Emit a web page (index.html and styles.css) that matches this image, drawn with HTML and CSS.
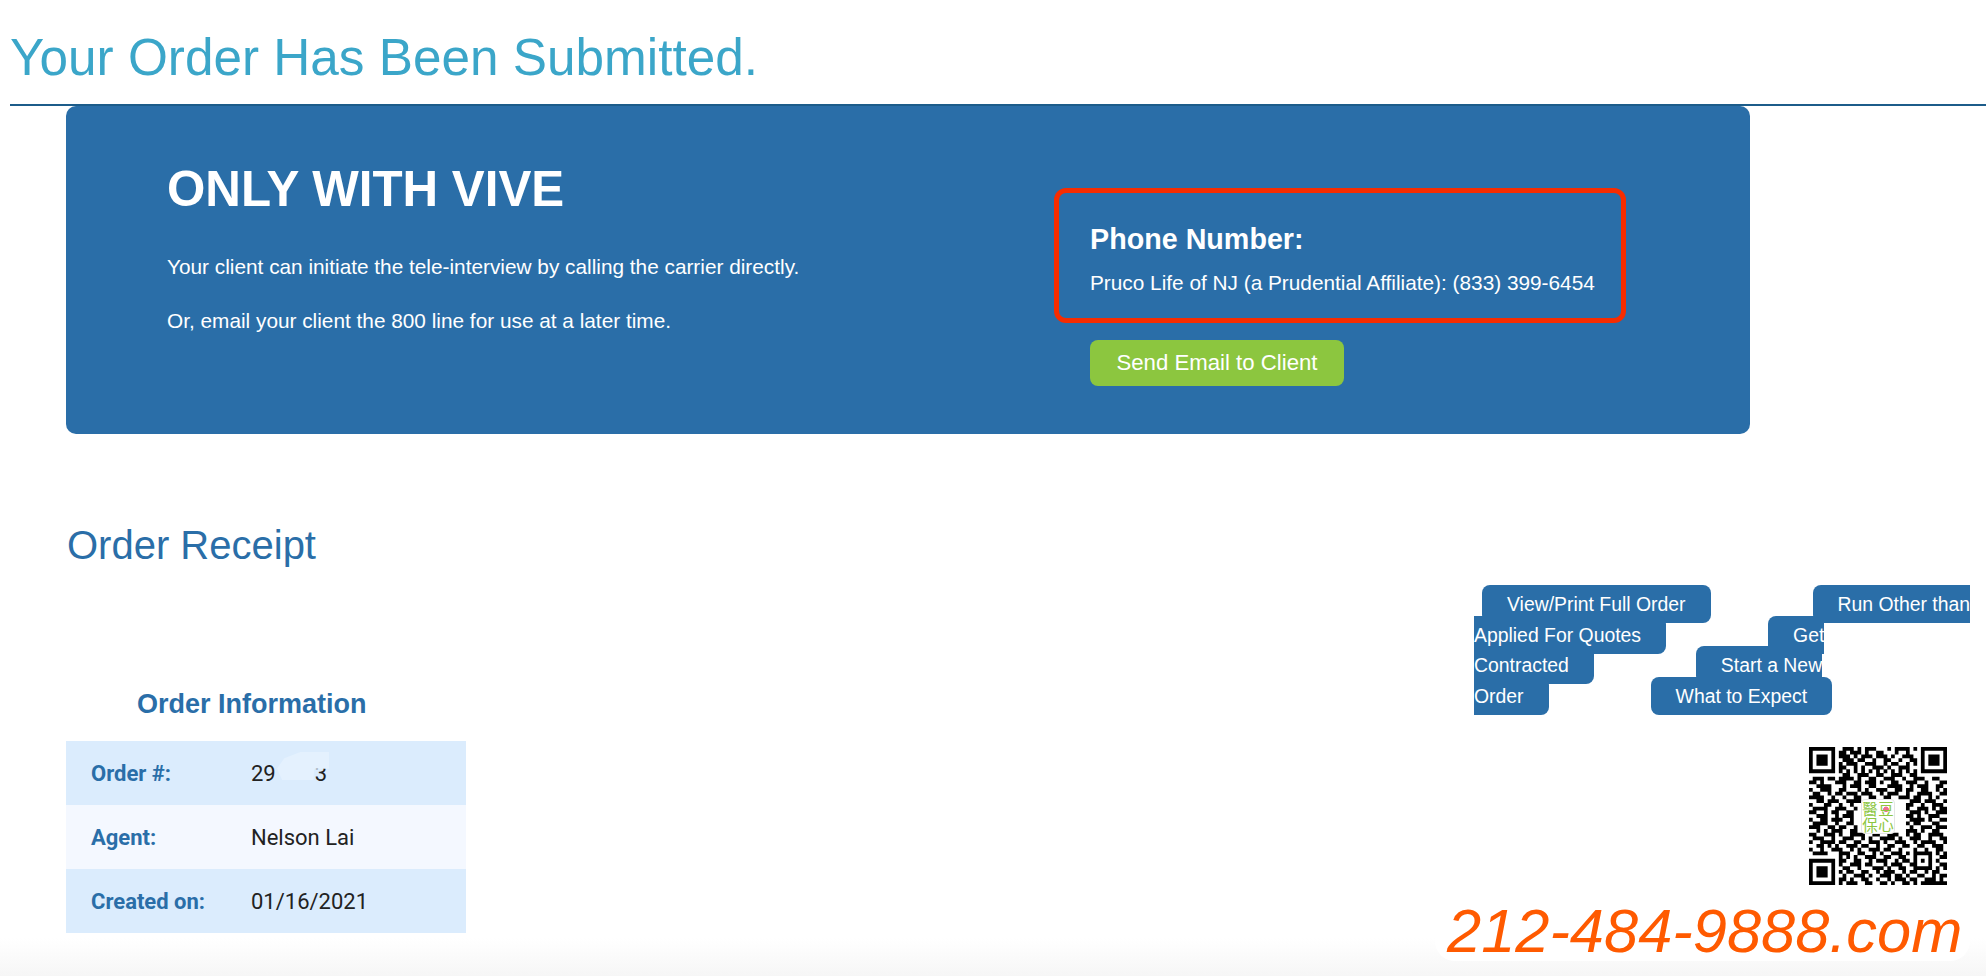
FILE: index.html

```html
<!DOCTYPE html>
<html>
  <head>
    <title>Your Order Has Been Submitted</title>
    <link rel="stylesheet" href="styles.css">
  </head>
  <body>
    <header class="page-head">
      <h1>Your Order Has Been Submitted.</h1>
    </header>

    <section class="hero">
      <div class="hero-left">
        <h2>ONLY WITH VIVE</h2>
        <p class="hero-first">Your client can initiate the tele-interview by calling the carrier directly.</p>
        <p class="hero-second">Or, email your client the 800 line for use at a later time.</p>
      </div>
      <div class="hero-right">
        <div class="phone-box">
          <h3>Phone Number:</h3>
          <p>Pruco Life of NJ (a Prudential Affiliate): (833) 399-6454</p>
        </div>
        <button type="button" class="send-btn">Send Email to Client</button>
      </div>
    </section>

    <section class="lower">
      <div class="receipt">
        <h2 class="receipt-title">Order Receipt</h2>
        <h3 class="info-title">Order Information</h3>
        <table class="info-table">
          <tr>
            <th>Order #:</th>
            <td class="order-no">29<span class="order-gap"></span>3<span class="smudge"></span></td>
          </tr>
          <tr>
            <th>Agent:</th>
            <td>Nelson Lai</td>
          </tr>
          <tr>
            <th>Created on:</th>
            <td>01/16/2021</td>
          </tr>
        </table>
      </div>

      <div class="side">
        <div class="actions"><a href="#" class="first">View/Print Full Order</a><a href="#">Run Other than<br>Applied For Quotes</a><a href="#">Get<br>Contracted</a><a href="#">Start a New<br>Order</a><a href="#">What to Expect</a></div>

        <div class="qr">
          <svg width="138" height="138" viewBox="0 0 37 37" class="qr-code">
            <path fill="none" stroke="#000" stroke-width="1.02" d="
              M0 .5h7M9 .5h3M13 .5h1M15 .5h3M21 .5h1M23 .5h4M28 .5h1M30 .5h7
              M0 1.5h1M6 1.5h1M8 1.5h2M11 1.5h3M15 1.5h1M18 1.5h2M23 1.5h1M26 1.5h1M30 1.5h1M36 1.5h1
              M0 2.5h1M2 2.5h3M6 2.5h1M8 2.5h3M12 2.5h1M14 2.5h3M18 2.5h3M22 2.5h1M25 2.5h3M30 2.5h1M32 2.5h3M36 2.5h1
              M0 3.5h1M2 3.5h3M6 3.5h1M9 3.5h3M13 3.5h2M17 3.5h1M20 3.5h2M24 3.5h1M27 3.5h2M30 3.5h1M32 3.5h3M36 3.5h1
              M0 4.5h1M2 4.5h3M6 4.5h1M8 4.5h1M10 4.5h3M15 4.5h3M20 4.5h1M22 4.5h2M26 4.5h1M28 4.5h1M30 4.5h1M32 4.5h3M36 4.5h1
              M0 5.5h1M6 5.5h1M8 5.5h2M12 5.5h1M14 5.5h1M17 5.5h3M21 5.5h1M24 5.5h3M30 5.5h1M36 5.5h1
              M0 6.5h7M8 6.5h1M10 6.5h1M12 6.5h1M14 6.5h1M16 6.5h1M18 6.5h1M20 6.5h1M22 6.5h1M24 6.5h1M26 6.5h1M28 6.5h1M30 6.5h7
              M9 7.5h2M13 7.5h3M18 7.5h2M22 7.5h3M27 7.5h2
              M1 8.5h3M5 8.5h2M8 8.5h4M13 8.5h1M16 8.5h2M20 8.5h3M25 8.5h1M28 8.5h3M33 8.5h2
              M0 9.5h2M3 9.5h1M7 9.5h3M12 9.5h2M15 9.5h3M19 9.5h1M22 9.5h2M26 9.5h3M31 9.5h1M35 9.5h2
              M2 10.5h4M9 10.5h1M11 10.5h3M16 10.5h2M21 10.5h4M27 10.5h1M29 10.5h3M34 10.5h2
              M0 11.5h1M3 11.5h3M8 11.5h2M13 11.5h1M15 11.5h1M18 11.5h3M23 11.5h2M26 11.5h2M30 11.5h2M34 11.5h1M36 11.5h1
              M1 12.5h2M5 12.5h1M7 12.5h2M10 12.5h3M14 12.5h3M19 12.5h1M21 12.5h3M26 12.5h1M29 12.5h4M35 12.5h2
              M0 13.5h4M6 13.5h1M9 13.5h1M12 13.5h2M16 13.5h2M20 13.5h2M24 13.5h3M28 13.5h2M32 13.5h1M34 13.5h1
              M2 14.5h2M5 14.5h3M10 14.5h4M27 14.5h3M31 14.5h3M36 14.5h1
              M0 15.5h1M4 15.5h2M8 15.5h1M11 15.5h1M26 15.5h2M30 15.5h1M33 15.5h3
              M1 16.5h4M7 16.5h3M12 16.5h1M26 16.5h1M29 16.5h3M33 16.5h1M35 16.5h2
              M0 17.5h2M4 17.5h1M6 17.5h2M10 17.5h2M27 17.5h3M31 17.5h1M34 17.5h3
              M2 18.5h3M7 18.5h1M9 18.5h3M26 18.5h2M29 18.5h1M32 18.5h3
              M0 19.5h1M3 19.5h2M6 19.5h3M11 19.5h1M27 19.5h4M32 19.5h1M35 19.5h2
              M1 20.5h4M7 20.5h1M10 20.5h2M26 20.5h1M28 20.5h2M33 20.5h2
              M0 21.5h3M5 21.5h2M8 21.5h2M12 21.5h1M27 21.5h1M30 21.5h3M34 21.5h3
              M2 22.5h1M4 22.5h1M6 22.5h3M11 22.5h2M26 22.5h3M30 22.5h1M33 22.5h2
              M0 23.5h2M4 23.5h3M8 23.5h1M11 23.5h4M17 23.5h2M21 23.5h3M26 23.5h1M28 23.5h2M32 23.5h4
              M1 24.5h3M6 24.5h1M9 24.5h3M14 24.5h1M16 24.5h1M19 24.5h4M24 24.5h1M27 24.5h3M32 24.5h1M35 24.5h2
              M0 25.5h1M3 25.5h4M8 25.5h2M12 25.5h2M16 25.5h3M20 25.5h1M23 25.5h3M28 25.5h1M30 25.5h4M36 25.5h1
              M2 26.5h2M5 26.5h1M7 26.5h1M10 26.5h3M14 26.5h2M18 26.5h1M21 26.5h2M25 26.5h2M29 26.5h2M33 26.5h3
              M0 27.5h1M3 27.5h1M6 27.5h3M11 27.5h1M13 27.5h1M16 27.5h3M20 27.5h2M24 27.5h1M28 27.5h1M31 27.5h1M34 27.5h2
              M1 28.5h4M8 28.5h3M13 28.5h2M17 28.5h1M19 28.5h1M22 28.5h3M26 28.5h1M28 28.5h5M34 28.5h1M36 28.5h1
              M8 29.5h1M10 29.5h1M12 29.5h1M15 29.5h3M20 29.5h2M24 29.5h2M28 29.5h1M32 29.5h1M35 29.5h2
              M0 30.5h7M8 30.5h2M12 30.5h2M16 30.5h1M18 30.5h3M23 30.5h1M25 30.5h2M28 30.5h1M30 30.5h1M32 30.5h1M34 30.5h1
              M0 31.5h1M6 31.5h1M8 31.5h1M11 31.5h3M15 31.5h2M20 31.5h1M22 31.5h3M27 31.5h2M32 31.5h1M35 31.5h2
              M0 32.5h1M2 32.5h3M6 32.5h1M9 32.5h2M13 32.5h1M17 32.5h3M21 32.5h1M24 32.5h2M28 32.5h5M34 32.5h1M36 32.5h1
              M0 33.5h1M2 33.5h3M6 33.5h1M8 33.5h1M10 33.5h2M14 33.5h2M18 33.5h1M20 33.5h3M25 33.5h1M27 33.5h2M31 33.5h1M33 33.5h2
              M0 34.5h1M2 34.5h3M6 34.5h1M9 34.5h1M12 34.5h3M16 34.5h1M19 34.5h3M23 34.5h2M26 34.5h1M29 34.5h2M33 34.5h1M35 34.5h2
              M0 35.5h1M6 35.5h1M8 35.5h2M11 35.5h1M14 35.5h2M18 35.5h1M21 35.5h1M23 35.5h3M27 35.5h2M31 35.5h3M35 35.5h1
              M0 36.5h7M8 36.5h1M10 36.5h3M15 36.5h2M19 36.5h2M22 36.5h1M25 36.5h2M28 36.5h1M30 36.5h7"/>
          </svg>
          <div class="qr-logo">
            <span>醫</span><span class="qr-dou">豆</span><span>保</span><span>心</span>
          </div>
        </div>

        <div class="phone-ad">212-484-9888.com</div>
      </div>
    </section>
  </body>
</html>
```

FILE: styles.css

```css
html {
  height: 100%;
}

body {
  margin: 0;
  height: 976px;
  overflow: hidden;
  font-family: "Liberation Sans", Arial, sans-serif;
  background: linear-gradient(to bottom, #ffffff, #f6f6f6) no-repeat left bottom / 100% 38px #ffffff;
}

.page-head {
  margin-left: 10px;
  height: 104px;
  border-bottom: 2px solid #1c5c8a;
}

h1 {
  margin: 0;
  padding-top: 28px;
  font-size: 51.3px;
  line-height: 60px;
  font-weight: normal;
  color: #3ba6c9;
}

.hero {
  display: flex;
  margin-left: 66px;
  width: 1684px;
  height: 328px;
  border-radius: 10px;
  background-color: #2a6ea8;
  color: #ffffff;
}

.hero-left {
  width: 988px;
  box-sizing: border-box;
  padding: 60px 0 0 101px;
}

.hero-left h2 {
  margin: 0;
  font-size: 49.3px;
  line-height: 46px;
}

.hero-left p {
  margin: 0;
  font-size: 20.8px;
  line-height: 24px;
}

.hero-first {
  padding-top: 43px;
}

.hero-second {
  padding-top: 30px;
}

.hero-right {
  padding-top: 82px;
}

.phone-box {
  box-sizing: border-box;
  width: 572px;
  height: 135px;
  padding: 31px 0 0 31px;
  border: 5px solid #f72c00;
  border-radius: 12px;
}

.phone-box h3 {
  margin: 0;
  font-size: 28.7px;
  line-height: 30px;
}

.phone-box p {
  margin: 17px 0 0;
  font-size: 20.8px;
  line-height: 24px;
  white-space: nowrap;
}

.send-btn {
  display: block;
  margin: 17px 0 0 36px;
  width: 254px;
  height: 46px;
  padding: 0;
  border: none;
  border-radius: 8px;
  background-color: #8cc63f;
  color: #ffffff;
  font-family: "Liberation Sans", Arial, sans-serif;
  font-size: 22.2px;
}

.lower {
  display: flex;
  justify-content: space-between;
  padding-right: 16px;
}

.receipt {
  margin-left: 66px;
}

.receipt-title {
  margin: 89px 0 0 1px;
  font-size: 40px;
  line-height: 44px;
  font-weight: normal;
  color: #2a6ea8;
}

.info-title {
  margin: 122px 0 0 71px;
  font-size: 27px;
  line-height: 30px;
  color: #2a6ea8;
}

.info-table {
  margin-top: 22px;
  width: 400px;
  border-collapse: collapse;
  font-family: Roboto, sans-serif;
  font-size: 22px;
}

.info-table tr {
  height: 64px;
  background-color: #dbecfd;
}

.info-table tr:nth-child(2) {
  background-color: #f4f8ff;
}

.info-table th {
  width: 160px;
  padding: 0 0 0 25px;
  text-align: left;
  color: #2a6ea8;
}

.info-table td {
  padding: 0;
  color: #222222;
}

.order-no {
  position: relative;
}

.order-gap {
  display: inline-block;
  width: 39px;
}

/* light smear hiding the middle of the order number */
.smudge {
  position: absolute;
  left: 26px;
  top: 11px;
  width: 52px;
  height: 28px;
  background-color: #e4f1fe;
  clip-path: polygon(14% 22%, 45% 0, 100% 0, 100% 60%, 72% 60%, 70% 100%, 10% 100%, 0 60%);
}

.side {
  width: 535px;
  padding-top: 155px;
}

.actions {
  margin-left: 39px;
  font-size: 19.4px;
  line-height: 30.6px;
  white-space: nowrap;
}

.actions a {
  margin-left: 102px;
  padding: 8px 25px;
  border-radius: 8px;
  background-color: #2a6ea8;
  color: #ffffff;
  text-decoration: none;
}

.actions a.first {
  margin-left: 8px;
}

.qr {
  display: grid;
  place-items: center;
  margin: 36px 0 0 374px;
  width: 138px;
  height: 138px;
}

.qr-code {
  grid-area: 1 / 1;
  display: block;
}

.qr-logo {
  grid-area: 1 / 1;
  z-index: 1;
  display: grid;
  grid-template-columns: 1fr 1fr;
  box-sizing: border-box;
  width: 34px;
  height: 35px;
  border-radius: 4px;
  background-color: #ffffff;
  border: 1px solid #e4e4e4;
  color: #8cc63f;
  font-family: "Noto Sans CJK TC", sans-serif;
  font-size: 15.5px;
  line-height: 16.5px;
  text-align: center;
}

.qr-dou {
  background: radial-gradient(circle at 50% 58%, #ee6f8e 2.5px, transparent 3px);
}

.phone-ad {
  margin-top: 13px;
  height: 63px;
  padding-left: 12px;
  border-radius: 20px;
  background-color: #ffffff;
  color: #ff5a00;
  font-size: 61.4px;
  line-height: 66px;
  font-style: italic;
}
```
